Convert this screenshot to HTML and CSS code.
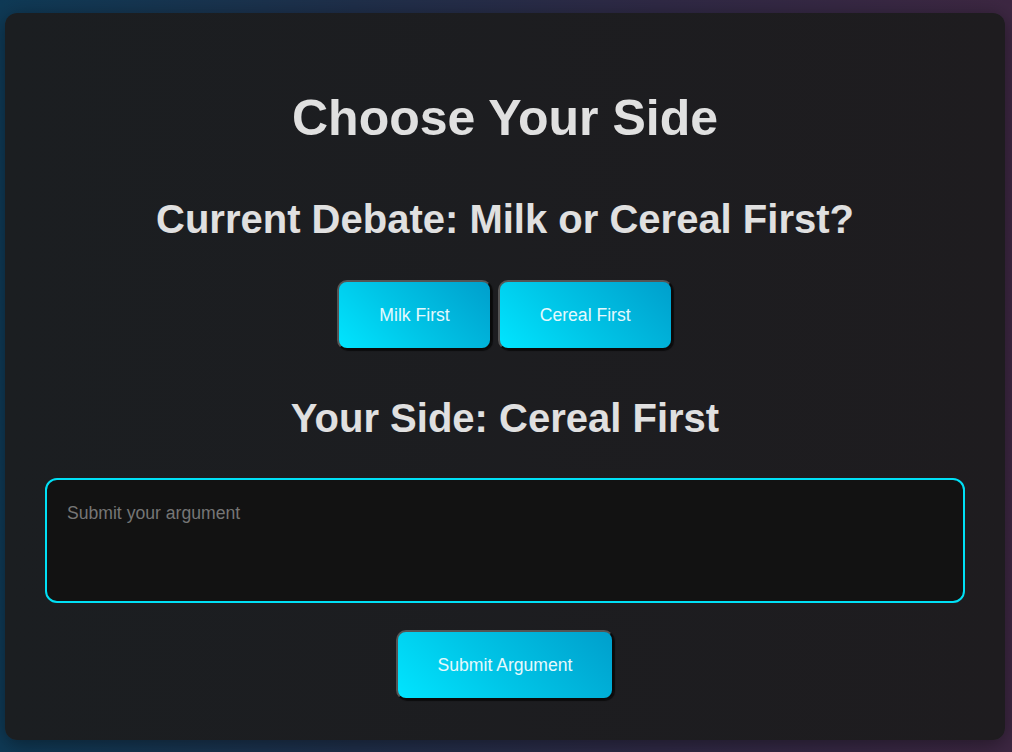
FILE: index.html
```html
<!DOCTYPE html>
<html lang="en">
<head>
<meta charset="utf-8">
<title>Choose Your Side</title>
<link rel="stylesheet" href="styles.css">
</head>
<body>
  <main class="card">
    <h1 class="title">Choose Your Side</h1>
    <h2 class="debate">Current Debate: Milk or Cereal First?</h2>
    <div class="choices">
      <button class="btn">Milk First</button>
      <button class="btn">Cereal First</button>
    </div>
    <h2 class="side">Your Side: Cereal First</h2>
    <textarea class="argument" placeholder="Submit your argument"></textarea>
    <button class="btn submit">Submit Argument</button>
  </main>
</body>
</html>
```

FILE: styles.css
```css
* { box-sizing: border-box; }

html, body {
  height: 100%;
}

body {
  margin: 0;
  padding: 13px 7px 12px 5px;
  background: linear-gradient(90deg, #0f3a56 0%, #1f2f4a 35%, #2f2945 65%, #3d2742 100%);
  font-family: "Liberation Sans", Arial, sans-serif;
  line-height: 1.5;
  color: #e0e0e0;
  display: flex;
}

.card {
  flex: 1;
  display: flex;
  flex-direction: column;
  align-items: center;
  padding: 40px 40px 40px;
  border-radius: 12px;
  background: linear-gradient(90deg, #1b1e21, #1e1c1f);
  box-shadow: 0 4px 20px rgba(0, 0, 0, 0.4);
}

.title {
  margin: 28px 0 0;
  font-size: 50px;
  font-weight: bold;
  line-height: 75px;
  color: #e0e0e0;
}

.debate,
.side {
  font-size: 40px;
  font-weight: bold;
  line-height: 60px;
  color: #e0e0e0;
}

.debate { margin: 33px 0 0; }
.side { margin: 38px 0 0; }

.choices {
  margin-top: 31px;
  display: flex;
  gap: 6px;
}

.btn {
  font-family: "Liberation Sans", Arial, sans-serif;
  font-size: 17.6px;
  line-height: 26px;
  padding: 20px 40px;
  color: #e6f9fd;
  background: linear-gradient(45deg, #00e5ff 0%, #00c4e6 45%, #009fcc 100%);
  border: 2px solid;
  border-color: #555 #0a0a0a #0a0a0a #555;
  border-radius: 10px;
  box-shadow: 1px 1px 1px rgba(0, 0, 0, 0.6);
  cursor: pointer;
}

.argument {
  margin-top: 30px;
  width: 100%;
  height: 125px;
  padding: 20px;
  background: #121212;
  border: 2px solid #00e0f5;
  border-radius: 12px;
  color: #e0e0e0;
  font-family: "Liberation Sans", Arial, sans-serif;
  font-size: 17.6px;
  line-height: 1.5;
  resize: none;
  outline: none;
}

.argument::placeholder {
  color: #767676;
}

.submit {
  margin-top: 27px;
}
```
